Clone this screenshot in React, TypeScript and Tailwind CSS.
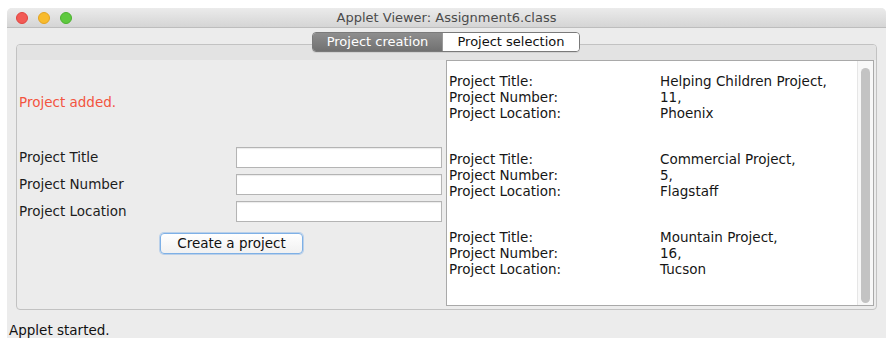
import React from 'react';

const projects = [
  { title: 'Helping Children Project,', number: '11,', location: 'Phoenix' },
  { title: 'Commercial Project,', number: '5,', location: 'Flagstaff' },
  { title: 'Mountain Project,', number: '16,', location: 'Tucson' },
];

const font = "font-['DejaVu_Sans',_'Liberation_Sans',_sans-serif]";

const TrafficLights = () => (
  <div className="flex items-center gap-[10px] pl-[9px]">
    <span className="w-[12px] h-[12px] rounded-full bg-[#f25a55] border border-[#e0443f]" />
    <span className="w-[12px] h-[12px] rounded-full bg-[#f8bb2d] border border-[#e2a322]" />
    <span className="w-[12px] h-[12px] rounded-full bg-[#5fc93f] border border-[#4bb12f]" />
  </div>
);

const FormRow = ({ label }: { label: string }) => (
  <div className="flex items-center h-[21px]">
    <span className="w-[219px] pl-[2px] text-[13.5px] text-[#1c1c1c]">{label}</span>
    <div className="w-[206px] h-[21px] bg-white border border-[#b4b4b4] shadow-[inset_0_1px_1px_rgba(0,0,0,0.08)]" />
  </div>
);

export default function App() {
  return (
    <div className={`w-[894px] h-[344px] bg-white pt-[8px] pl-[7px] ${font}`}>
      <div className="w-[879px] h-[330px] bg-[#ececec] flex flex-col rounded-t-[5px] overflow-hidden">
        {/* Title bar */}
        <div className="relative h-[20px] flex items-center bg-gradient-to-b from-[#ebebeb] to-[#d5d5d5] border-b border-[#bdbdbd]">
          <TrafficLights />
          <span className="absolute inset-0 flex items-center justify-center text-[13px] text-[#4b4b4b]">
            Applet Viewer: Assignment6.class
          </span>
        </div>

        {/* Tabs + panel */}
        <div className="pl-[9px] pt-[4px]">
          <div className="relative z-10 flex justify-center w-[860px] h-[20px]">
            <div className="flex h-[20px] rounded-[4px] border border-[#7a7a7a] overflow-hidden shadow-[0_1px_0_rgba(0,0,0,0.08)]">
              <div className="w-[129px] flex items-center justify-center bg-gradient-to-b from-[#8e8e8e] to-[#717171] text-white text-[13px]">
                Project creation
              </div>
              <div className="w-[137px] flex items-center justify-center bg-white border-l border-[#9a9a9a] text-[#111] text-[13px]">
                Project selection
              </div>
            </div>
          </div>

          <div className="-mt-[8px] w-[861px] h-[266px] border border-[#c2c2c2] rounded-[4px] flex flex-col overflow-hidden">
            <div className="h-[15px] bg-[#e3e3e3]" />
            <div className="flex flex-1 pr-[2px] pb-[3px]">
              {/* Left: form */}
              <div className="w-[429px] flex flex-col">
                <div className="pt-[34px] pl-[2px] h-[50px] leading-[16px] text-[13.5px] text-[#f3543f]">
                  Project added.
                </div>
                <div className="mt-[37px] flex flex-col gap-[6px]">
                  <FormRow label="Project Title" />
                  <FormRow label="Project Number" />
                  <FormRow label="Project Location" />
                </div>
                <div className="mt-[11px] flex justify-center">
                  <button className="w-[143px] h-[21px] rounded-[4px] border border-[#7eb0e6] bg-gradient-to-b from-white to-[#f1f1f1] shadow-[0_0_0_1px_rgba(126,176,230,0.45)] text-[13.5px] text-[#111] leading-none">
                    Create a project
                  </button>
                </div>
              </div>

              {/* Right: list */}
              <div className="flex-1 flex bg-white border border-[#a9a9a9]">
                <div className="flex-1 pl-[2px] pt-[12px] flex flex-col gap-[30px] text-[13.5px] leading-[16px] text-[#161616]">
                  {projects.map((p) => (
                    <div key={p.title} className="flex flex-col">
                      <div className="flex"><span className="w-[211px]">Project Title:</span><span>{p.title}</span></div>
                      <div className="flex"><span className="w-[211px]">Project Number:</span><span>{p.number}</span></div>
                      <div className="flex"><span className="w-[211px]">Project Location:</span><span>{p.location}</span></div>
                    </div>
                  ))}
                </div>
                <div className="w-[16px] bg-[#f8f8f8] border-l border-[#e6e6e6] flex justify-center pt-[7px] pb-[2px]">
                  <div className="w-[9px] h-[235px] rounded-full bg-[#c3c3c3]" />
                </div>
              </div>
            </div>
          </div>
        </div>

        {/* Status */}
        <div className="pl-[2px] mt-[12px] text-[13.5px] leading-[16px] text-[#111]">Applet started.</div>
      </div>
    </div>
  );
}
